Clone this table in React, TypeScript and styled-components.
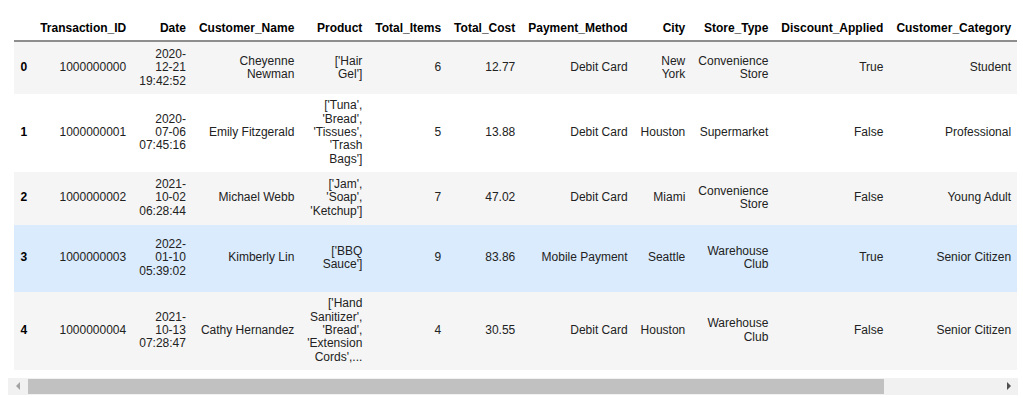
import React from 'react';
import styled, { createGlobalStyle } from 'styled-components';

type Tone = 'plain' | 'stripe' | 'hover';

interface RecordRow {
  index: number;
  values: string[];
  tone: Tone;
  height?: number;
}

const columns = [
  'Transaction_ID',
  'Date',
  'Customer_Name',
  'Product',
  'Total_Items',
  'Total_Cost',
  'Payment_Method',
  'City',
  'Store_Type',
  'Discount_Applied',
  'Customer_Category',
];

const rows: RecordRow[] = [
  {
    index: 0,
    tone: 'stripe',
    values: ['1000000000', '2020-\n12-21\n19:42:52', 'Cheyenne\nNewman', "['Hair\nGel']", '6', '12.77', 'Debit Card', 'New\nYork', 'Convenience\nStore', 'True', 'Student'],
  },
  {
    index: 1,
    tone: 'plain',
    values: ['1000000001', '2020-\n07-06\n07:45:16', 'Emily Fitzgerald', "['Tuna',\n'Bread',\n'Tissues',\n'Trash\nBags']", '5', '13.88', 'Debit Card', 'Houston', 'Supermarket', 'False', 'Professional'],
  },
  {
    index: 2,
    tone: 'stripe',
    height: 53,
    values: ['1000000002', '2021-\n10-02\n06:28:44', 'Michael Webb', "['Jam',\n'Soap',\n'Ketchup']", '7', '47.02', 'Debit Card', 'Miami', 'Convenience\nStore', 'False', 'Young Adult'],
  },
  {
    index: 3,
    tone: 'hover',
    height: 67,
    values: ['1000000003', '2022-\n01-10\n05:39:02', 'Kimberly Lin', "['BBQ\nSauce']", '9', '83.86', 'Mobile Payment', 'Seattle', 'Warehouse\nClub', 'True', 'Senior Citizen'],
  },
  {
    index: 4,
    tone: 'stripe',
    values: ['1000000004', '2021-\n10-13\n07:28:47', 'Cathy Hernandez', "['Hand\nSanitizer',\n'Bread',\n'Extension\nCords',...", '4', '30.55', 'Debit Card', 'Houston', 'Warehouse\nClub', 'False', 'Senior Citizen'],
  },
];

const GlobalStyle = createGlobalStyle`
  html, body {
    margin: 0;
    background: #ffffff;
  }
  body {
    font-family: "Liberation Sans", Arial, sans-serif;
  }
`;

const Output = styled.div`
  width: 1010px;
  margin: 0 0 0 8px;
  padding-top: 16px;
`;

const Frame = styled.div`
  width: 1009px;
  overflow: hidden;
  padding-left: 6px;
  box-sizing: border-box;
`;

const Table = styled.table`
  border-collapse: collapse;
  border-spacing: 0;
  font-size: 12px;
  color: #222;
`;

const Head = styled.thead`
  border-bottom: 2px solid #8e8e8e;
`;

const HeadCell = styled.th`
  padding: 5.5px 6.5px;
  line-height: 13.4px;
  font-weight: bold;
  color: #000;
  text-align: right;
  white-space: pre;
  vertical-align: bottom;
`;

const Row = styled.tr<{ $tone: Tone; $height?: number }>`
  background: ${({ $tone }) =>
    $tone === 'hover' ? '#d9ebfc' : $tone === 'stripe' ? '#f5f5f5' : '#ffffff'};
  height: ${({ $height }) => ($height ? `${$height}px` : 'auto')};
`;

const IndexCell = styled.th`
  padding: 5.5px 6.5px;
  line-height: 13.4px;
  font-weight: bold;
  color: #000;
  text-align: left;
  vertical-align: middle;
`;

const Cell = styled.td`
  padding: 5.5px 6.5px;
  line-height: 13.4px;
  text-align: right;
  white-space: pre;
  vertical-align: middle;
`;

const ScrollBar = styled.div`
  display: flex;
  height: 17px;
  margin-top: 8px;
  background: #f1f1f1;
`;

const ScrollButton = styled.div`
  width: 19px;
  flex: none;
  display: flex;
  align-items: center;
  justify-content: center;
`;

const Arrow = styled.span<{ $dir: 'left' | 'right'; $active?: boolean }>`
  width: 0;
  height: 0;
  border-top: 4px solid transparent;
  border-bottom: 4px solid transparent;
  ${({ $dir, $active }) =>
    $dir === 'left'
      ? `border-right: 4px solid ${$active ? '#505050' : '#a3a3a3'};`
      : `border-left: 4px solid ${$active ? '#505050' : '#a3a3a3'};`}
`;

const Track = styled.div`
  flex: 1;
  display: flex;
  align-items: center;
  padding-left: 1px;
`;

const Thumb = styled.div<{ $size: number }>`
  width: ${({ $size }) => $size}%;
  height: 15px;
  background: #c1c1c1;
`;

const App: React.FC = () => {
  return (
    <>
      <GlobalStyle />
      <Output>
        <Frame>
          <Table>
            <Head>
              <tr>
                <HeadCell />
                {columns.map((name) => (
                  <HeadCell key={name}>{name}</HeadCell>
                ))}
              </tr>
            </Head>
            <tbody>
              {rows.map((row) => (
                <Row key={row.index} $tone={row.tone} $height={row.height}>
                  <IndexCell>{row.index}</IndexCell>
                  {row.values.map((value, i) => (
                    <Cell key={columns[i]}>{value}</Cell>
                  ))}
                </Row>
              ))}
            </tbody>
          </Table>
        </Frame>
        <ScrollBar>
          <ScrollButton>
            <Arrow $dir="left" />
          </ScrollButton>
          <Track>
            <Thumb $size={88.2} />
          </Track>
          <ScrollButton>
            <Arrow $dir="right" $active />
          </ScrollButton>
        </ScrollBar>
      </Output>
    </>
  );
};

export default App;
